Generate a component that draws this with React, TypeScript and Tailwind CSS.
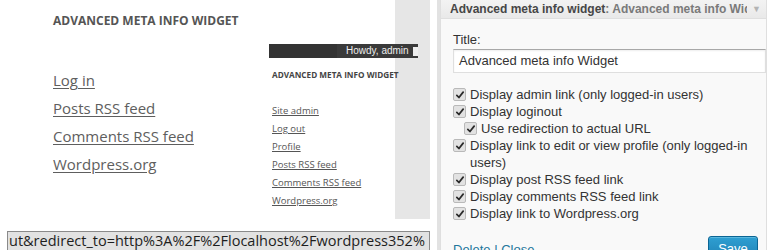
import React from "react";

const Check = ({ className = "" }: { className?: string }) => (
  <span
    className={`mt-[2px] inline-flex h-[13px] w-[13px] shrink-0 items-center justify-center rounded-[2px] border border-[#b9b9b9] bg-[#e2e2e2] ${className}`}
  >
    <svg viewBox="0 0 12 12" className="h-[10px] w-[10px]">
      <path d="M2.2 6.4 L4.7 9 L9.8 2.6" fill="none" stroke="#2a2a2a" strokeWidth="2.1" strokeLinecap="round" strokeLinejoin="round" />
    </svg>
  </span>
);

const Row = ({ children, indent = false }: { children: React.ReactNode; indent?: boolean }) => (
  <div className={`flex items-start gap-[4px] leading-[17px] ${indent ? "pl-[11px]" : ""}`}>
    <Check />
    <span>{children}</span>
  </div>
);

export default function App() {
  return (
    <div className="flex h-[250px] w-[772px] overflow-hidden bg-white">
      {/* Left composite */}
      <div className="relative h-[250px] w-[440px] shrink-0 bg-white">
        <div className="absolute left-[395px] top-0 h-[219px] w-[35px] bg-[#e6e6e6]" />
        <div className="absolute left-[437px] top-0 h-full w-[3px] bg-[#e2e2e2]" />

        <div className="pl-[53px] pt-[13px] font-['Open_Sans',sans-serif]">
          <h3 className="text-[12px] font-bold leading-[16px] text-[#555]">ADVANCED META INFO WIDGET</h3>
          <ul className="mt-[37px] text-[15px] leading-[28px] text-[#5e5e5e]">
            <li className="underline underline-offset-2">Log in</li>
            <li className="underline underline-offset-2">Posts RSS feed</li>
            <li className="underline underline-offset-2">Comments RSS feed</li>
            <li className="underline underline-offset-2">Wordpress.org</li>
          </ul>
        </div>

        {/* small screenshot overlay */}
        <div className="absolute left-[269px] top-[44px] w-[149px]">
          <div className="flex h-[14px] items-center bg-[#333]">
            <div className="h-full w-[68px] shrink-0" />
            <div className="flex h-full flex-1 items-center whitespace-nowrap bg-[#3a3a3a] pl-[9px] font-['Liberation_Sans',sans-serif] text-[10px] leading-[14px] text-[#eee]">
              <span>Howdy, admin</span>
              <span className="ml-auto h-[9px] w-[5px] shrink-0 bg-[#eee]" />
            </div>
          </div>
          <div className="h-[161px] w-[126px] bg-white pl-[3px] pt-[12px] font-['Open_Sans',sans-serif]">
            <h4 className="whitespace-nowrap text-[8.2px] font-bold leading-[10px] text-[#444]">ADVANCED META INFO WIDGET</h4>
            <ul className="mt-[22px] text-[9.5px] leading-[18px] text-[#555]">
              <li className="underline">Site admin</li>
              <li className="underline">Log out</li>
              <li className="underline">Profile</li>
              <li className="underline">Posts RSS feed</li>
              <li className="underline">Comments RSS feed</li>
              <li className="underline">Wordpress.org</li>
            </ul>
          </div>
        </div>

        {/* status bar overlay */}
        <div className="absolute left-[7px] top-[231px] h-[19px] w-[423px] overflow-hidden whitespace-nowrap border-x border-t border-[#8a8a8a] bg-[#e2e2e2] pl-[1px] font-['Open_Sans',sans-serif] text-[14.5px] leading-[18px] text-[#1e1e1e]">
          ut&amp;redirect_to=http%3A%2F%2Flocalhost%2Fwordpress352%
        </div>
      </div>

      {/* Right widget form */}
      <div className="flex h-[250px] w-[327px] shrink-0 flex-col border-x border-[#dfdfdf] bg-[#f9f9f9] font-['Liberation_Sans',Arial,sans-serif] text-[13px] text-[#333]">
        <div className="flex h-[19px] shrink-0 items-center border-b border-[#dfdfdf] bg-gradient-to-b from-[#f3f3f3] to-[#e9e9e9] pl-[9px] pr-[5px]">
          <div className="flex-1 overflow-hidden whitespace-nowrap text-[12px] font-bold leading-[18px] text-[#464646]">
            Advanced meta info widget<span className="text-[#7a7a7a]">: Advanced meta info Widget</span>
          </div>
          <span className="ml-[5px] text-[9px] leading-[18px] text-[#b3b3b3]">▼</span>
        </div>
        <div className="flex flex-1 flex-col pl-[12px] pr-[10px]">
          <div className="mt-[12px] leading-[17px]">Title:</div>
          <div className="mr-[-10px] mt-[1px] flex h-[24px] items-center border border-[#dfdfdf] border-t-[#a8a8a8] bg-white pl-[5px] shadow-[inset_0_1px_2px_rgba(0,0,0,0.07)]">
            Advanced meta info Widget
          </div>
          <div className="mt-[13px] flex flex-col">
            <Row>Display admin link (only logged-in users)</Row>
            <Row>Display loginout</Row>
            <Row indent>Use redirection to actual URL</Row>
            <Row>Display link to edit or view profile (only logged-in users)</Row>
            <Row>Display post RSS feed link</Row>
            <Row>Display comments RSS feed link</Row>
            <Row>Display link to Wordpress.org</Row>
          </div>
          <div className="mt-[14px] flex items-start justify-between">
            <div className="mt-[5px] leading-[17px] text-[#21759b]">
              Delete <span className="text-[#21759b]">|</span> Close
            </div>
            <button className="mr-[-2px] h-[26px] w-[50px] rounded-[3px] border border-[#0b6594] bg-gradient-to-b from-[#2e9fd2] to-[#1f80b3] text-[13px] leading-[24px] text-white shadow-[inset_0_1px_0_rgba(120,200,230,0.6)]">
              Save
            </button>
          </div>
        </div>
      </div>
      <div className="flex-1 bg-white" />
    </div>
  );
}
